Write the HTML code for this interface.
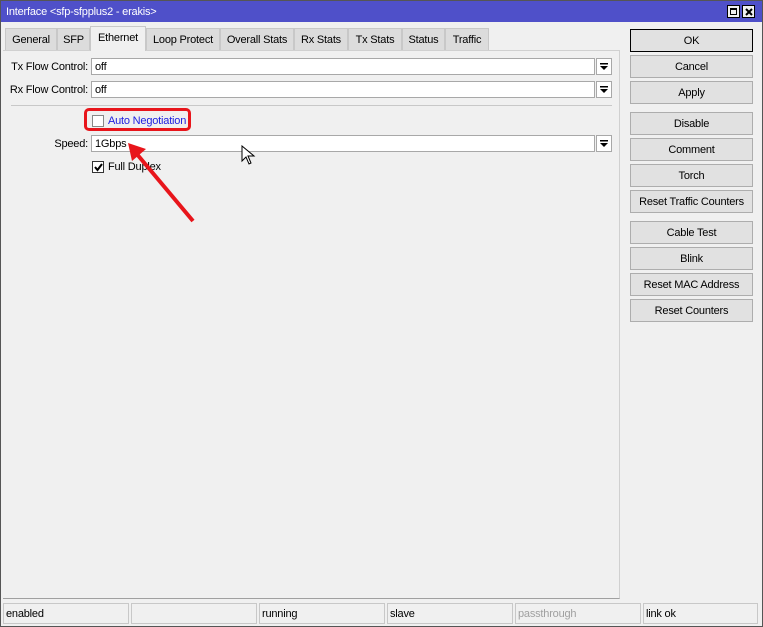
<html><head><style>
body{margin:0;width:763px;height:627px;background:#f0f0f0;font-family:"Liberation Sans",sans-serif;font-size:11px;letter-spacing:-0.2px;position:relative;overflow:hidden;white-space:nowrap}
.a{position:absolute;box-sizing:border-box}
.tab{position:absolute;top:28px;height:22px;background:#dcdcdc;border:1px solid #c8c8c8;border-bottom:none;box-sizing:border-box;text-align:center;line-height:23px;color:#000}
.inp{position:absolute;left:91px;width:504px;height:17px;background:#fff;border:1px solid #a8a8a8;box-sizing:border-box;padding-left:3px;line-height:17px}
.dd{position:absolute;left:596px;width:16px;height:17px;background:#fff;border:1px solid #a8a8a8;box-sizing:border-box}
.lbl{position:absolute;text-align:right;width:88px;left:0}
.btn{position:absolute;left:630px;width:123px;height:23px;background:#e1e1e1;border:1px solid #adadad;box-sizing:border-box;text-align:center;line-height:23px}
.sb{position:absolute;top:603px;height:21px;border:1px solid #c8c8c8;box-sizing:border-box;padding-left:2px;line-height:20px}
.cb{position:absolute;width:12px;height:12px;background:#fff;border:1px solid #333;box-sizing:border-box}
</style></head><body>
<div class="a" style="left:0;top:0;width:763px;height:627px;border:1px solid #555"></div>
<div class="a" style="left:1px;top:1px;width:761px;height:21px;background:#4f50c9;color:#fff;padding-left:5px;line-height:23px">Interface &lt;sfp-sfpplus2 - erakis&gt;</div>
<div class="a" style="left:727px;top:5px;width:13px;height:13px;background:#f0f0f0;border:1px solid #000"><div class="a" style="left:2px;top:2px;width:7px;height:7px;border:1px solid #000;border-top-width:2px"></div></div>
<div class="a" style="left:742px;top:5px;width:13px;height:13px;background:#f0f0f0;border:1px solid #000"><svg class="a" style="left:2px;top:2px" width="8" height="8"><path d="M1,1 L7,7 M7,1 L1,7" stroke="#000" stroke-width="2"/></svg></div>

<div class="a" style="left:3px;top:50px;width:617px;height:549px;border:1px solid #d0d0d0;border-left:none;border-bottom:1px solid #a0a0a0"></div>
<div class="tab" style="left:5px;width:52px">General</div>
<div class="tab" style="left:57px;width:33px">SFP</div>
<div class="tab" style="left:90px;width:56px;top:26px;height:25px;background:#f0f0f0;line-height:23px">Ethernet</div>
<div class="tab" style="left:146px;width:74px">Loop Protect</div>
<div class="tab" style="left:220px;width:74px">Overall Stats</div>
<div class="tab" style="left:294px;width:54px">Rx Stats</div>
<div class="tab" style="left:348px;width:54px">Tx Stats</div>
<div class="tab" style="left:402px;width:43px">Status</div>
<div class="tab" style="left:445px;width:44px">Traffic</div>

<div class="lbl" style="top:60px;line-height:15px">Tx Flow Control:</div>
<div class="inp" style="top:58px">off</div><div class="dd" style="top:58px"><svg width="14" height="15"><rect x="3" y="4" width="8" height="1.5"/><path d="M3,7 L11,7 L7,11 Z"/></svg></div>
<div class="lbl" style="top:83px;line-height:15px">Rx Flow Control:</div>
<div class="inp" style="top:81px">off</div><div class="dd" style="top:81px"><svg width="14" height="15"><rect x="3" y="4" width="8" height="1.5"/><path d="M3,7 L11,7 L7,11 Z"/></svg></div>
<div class="a" style="left:11px;top:105px;width:601px;height:1px;background:#c8c8c8"></div>
<div class="a" style="left:84px;top:108px;width:107px;height:23px;border:3px solid #e8151b;border-radius:5px"></div>
<div class="cb" style="left:92px;top:115px;border-color:#888"></div>
<div class="a" style="left:108px;top:115px;color:#2020e0">Auto Negotiation</div>
<div class="lbl" style="top:137px;line-height:15px">Speed:</div>
<div class="inp" style="top:135px">1Gbps</div><div class="dd" style="top:135px"><svg width="14" height="15"><rect x="3" y="4" width="8" height="1.5"/><path d="M3,7 L11,7 L7,11 Z"/></svg></div>
<div class="cb" style="left:92px;top:161px"><svg class="a" style="left:1px;top:1px" width="9" height="9"><path d="M1,4 L3.5,7 L8,1" stroke="#000" stroke-width="2" fill="none"/></svg></div>
<div class="a" style="left:108px;top:161px">Full Duplex</div>
<svg class="a" style="left:120px;top:135px" width="80" height="95"><line x1="73" y1="86" x2="16" y2="18" stroke="#e8151b" stroke-width="4"/><polygon points="8,8 26,14 12,26" fill="#e8151b"/></svg>
<svg class="a" style="left:241px;top:145px" width="16" height="22"><path d="M1,1 L1,16 L5,12 L8,19 L10,18 L7,11 L13,11 Z" fill="#fff" stroke="#000"/></svg>

<div class="btn" style="top:29px;border:1px solid #000">OK</div>
<div class="btn" style="top:55px">Cancel</div>
<div class="btn" style="top:81px">Apply</div>
<div class="btn" style="top:112px">Disable</div>
<div class="btn" style="top:138px">Comment</div>
<div class="btn" style="top:164px">Torch</div>
<div class="btn" style="top:190px">Reset Traffic Counters</div>
<div class="btn" style="top:221px">Cable Test</div>
<div class="btn" style="top:247px">Blink</div>
<div class="btn" style="top:273px">Reset MAC Address</div>
<div class="btn" style="top:299px">Reset Counters</div>

<div class="sb" style="left:3px;width:126px">enabled</div>
<div class="sb" style="left:131px;width:126px"></div>
<div class="sb" style="left:259px;width:126px">running</div>
<div class="sb" style="left:387px;width:126px">slave</div>
<div class="sb" style="left:515px;width:126px;color:#a0a0a0">passthrough</div>
<div class="sb" style="left:643px;width:115px">link ok</div>
</body></html>
